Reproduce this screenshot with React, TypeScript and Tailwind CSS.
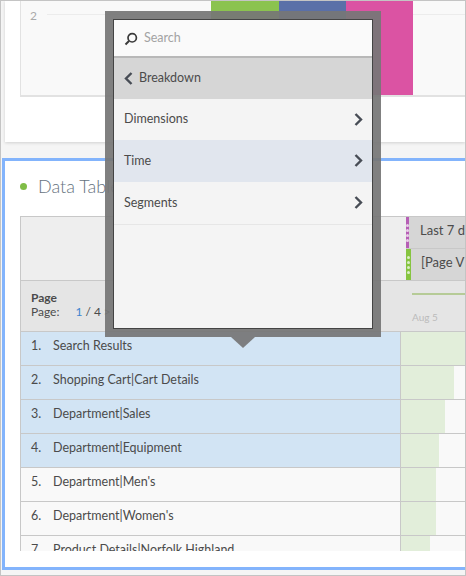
const rows = [
  { label: 'Search Results', bar: 'w-[64px]', selected: true },
  { label: 'Shopping Cart|Cart Details', bar: 'w-[53px]', selected: true },
  { label: 'Department|Sales', bar: 'w-[44px]', selected: true },
  { label: 'Department|Equipment', bar: 'w-[38px]', selected: true },
  { label: "Department|Men's", bar: 'w-[35px]', selected: false },
  { label: "Department|Women's", bar: 'w-[35px]', selected: false },
  { label: 'Product Details|Norfolk Highland', bar: 'w-[29px]', selected: false },
]

function Dots() {
  return (
    <div className="flex flex-col items-center gap-[2px]">
      {[0, 1, 2, 3].map((i) => (
        <span key={i} className="h-[3px] w-[3px] rounded-full bg-white/70" />
      ))}
    </div>
  )
}

function Chevron({ left }: { left?: boolean }) {
  return (
    <svg width="9" height="13" viewBox="0 0 9 13" fill="none">
      <path d={left ? 'M7.5 1 L2 6.5 L7.5 12' : 'M1.5 1 L7 6.5 L1.5 12'} stroke="#474c55" strokeWidth="2.4" />
    </svg>
  )
}

function MenuItem({ label, active, height }: { label: string; active?: boolean; height: string }) {
  return (
    <div className={`flex ${height} items-center justify-between pl-[10px] pr-[9px] ${active ? 'bg-[#e1e6ee]' : ''}`}>
      <span>{label}</span>
      <span className="mb-[1px] flex"><Chevron /></span>
    </div>
  )
}

function Popover() {
  return (
    <div className="absolute left-[104px] top-[10px]">
      <div className="h-[326px] w-[276px] bg-[rgba(118,118,118,0.93)] p-[8px]">
        <div className="h-full border border-[#444] bg-[#f4f4f4] text-[12.5px] text-[#4b4b4b]">
          <div className="flex h-[38px] items-center gap-[6px] border-b-2 border-[#b8b8b8] bg-[#fafafa] pl-[10px]">
            <svg width="14" height="14" viewBox="0 0 14 14" fill="none" className="mt-[2px]">
              <circle cx="8.2" cy="5.8" r="4.2" stroke="#3a3a3a" strokeWidth="1.7" />
              <path d="M5 9 L1.5 12.5" stroke="#3a3a3a" strokeWidth="2" />
            </svg>
            <span className="text-[#a3a3a3]">Search</span>
          </div>
          <div className="flex h-[41px] items-center gap-[6px] bg-[#d6d6d6] pb-[1px] pl-[10px]">
            <span className="mt-[1px] flex"><Chevron left /></span>
            <span>Breakdown</span>
          </div>
          <MenuItem label="Dimensions" height="h-[41px]" />
          <MenuItem label="Time" height="h-[42px]" active />
          <div className="h-[43px] border-b border-[#e6e6e6]">
            <MenuItem label="Segments" height="h-[42px]" />
          </div>
        </div>
      </div>
      <div className="ml-[126px] h-0 w-0 border-x-[12px] border-t-[11px] border-x-transparent border-t-[rgba(118,118,118,0.93)]" />
    </div>
  )
}

export default function App() {
  return (
    <div className="relative h-[576px] w-[466px] overflow-hidden border border-[#c4c4c4] bg-[#f5f5f5] font-['Lato',sans-serif]">
      <div className="ml-[4px] h-[141px] bg-white pl-[15px] shadow-[0_1px_3px_rgba(0,0,0,0.15)]">
        <div className="relative flex h-[96px] justify-start border-b-2 border-l border-[#e2e2e2] bg-[#f9f9f9]">
          <span className="mt-[8px] ml-[9px] text-[12px] leading-[14px] text-[#aaa]">2</span>
          <div className="mt-[13px] ml-[10px] h-px flex-1 bg-[#ececec]" />
          <div className="absolute bottom-0 left-[190px] top-0 flex">
            <div className="w-[68px] bg-[#8bc34f]" />
            <div className="w-[67px] bg-[#5a70a8]" />
            <div className="w-[67px] bg-[#db53a3]" />
          </div>
        </div>
      </div>

      <div className="ml-[1px] mt-[16px] h-[412px] border-x-0 border-y-[3px] border-l-[3px] border-[#83b4fc] bg-white pl-[15px]">
        <div className="flex h-[55px] items-center pb-[5px]">
          <span className="h-[7px] w-[7px] rounded-full bg-[#80bd47]" />
          <span className="ml-[11px] text-[18px] font-light text-[#66727e]">Data Table</span>
        </div>

        <div className="h-[335px] overflow-hidden border-l border-t border-[#c8c8c8] text-[12.5px] text-[#4b4b4b]">
          <div className="flex h-[64px] justify-end border-b border-[#c8c8c8] bg-[#eeeeee]">
            <div className="flex w-[59px] flex-col">
              <div className="flex h-[32px] border-b border-[#c8c8c8] bg-[#d6d6d6]">
                <div className="flex w-[5px] items-center justify-center bg-[#b65fb5]"><Dots /></div>
                <span className="ml-[11px] self-center whitespace-nowrap pb-[3px] text-[13px]">Last 7 d</span>
              </div>
              <div className="flex h-[31px] bg-[#d6d6d6]">
                <div className="flex w-[5px] items-center justify-center bg-[#86c440]"><Dots /></div>
                <span className="ml-[10px] self-center whitespace-nowrap pb-[3px] text-[13px]">[Page V</span>
              </div>
            </div>
          </div>

          <div className="flex h-[51px] border-b border-[#c8c8c8] bg-[#e5e5e5]">
            <div className="w-[380px] pl-[10px] pt-[10px] text-[12px] leading-[14px]">
              <div className="font-bold">Page</div>
              <div className="flex">
                <span>Page:</span>
                <span className="ml-[16px] text-[#3d84cf]">1</span>
                <span className="ml-[3px]">/</span>
                <span className="ml-[3px]">4</span>
                <span className="ml-[3px]">&gt;</span>
              </div>
            </div>
            <div className="flex-1 pl-[11px] pt-[12px]">
              <div className="h-[2px] bg-[#b6cb97]" />
              <div className="mt-[15px] text-[10px] leading-[14px] text-[#bbb]">Aug 5</div>
            </div>
          </div>

          {rows.map((row, i) => (
            <div key={row.label} className="flex h-[34px] border-b border-[#c8c8c8] bg-[#f9f9f9]">
              <div className={`flex w-[380px] border-r border-[#c8c8c8] pl-[10px] pt-[5px] ${row.selected ? 'bg-[#d2e4f4]' : ''}`}>
                <span className="w-[22px]">{i + 1}.</span>
                <span className="whitespace-nowrap">{row.label}</span>
              </div>
              <div className={`${row.bar} bg-[#e2eeda]`} />
            </div>
          ))}
        </div>
      </div>

      <Popover />
    </div>
  )
}
